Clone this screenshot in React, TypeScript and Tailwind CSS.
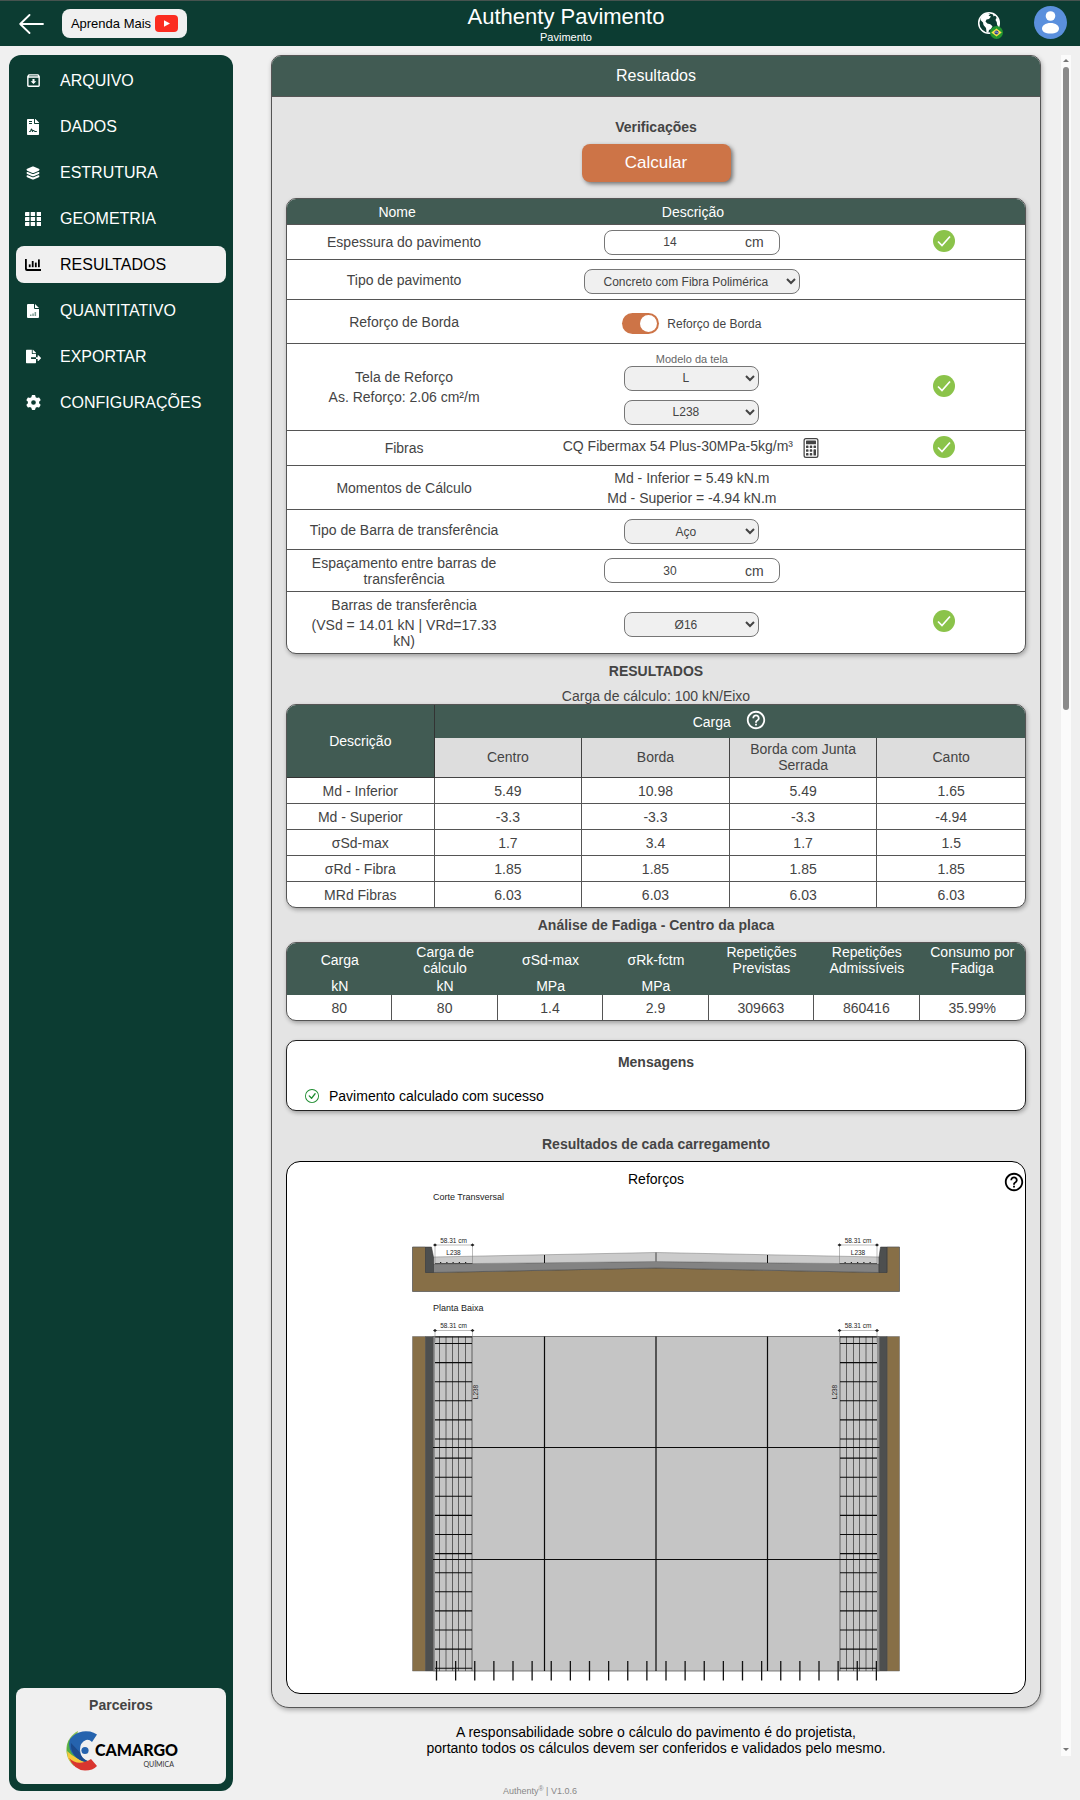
import { useState } from "react";
import type { ReactNode } from "react";
import { BsCalculator, BsCheckCircle } from "react-icons/bs";
import { FaFileContract, FaFileExport } from "react-icons/fa";
import { FaGear } from "react-icons/fa6";
import { IoLayers } from "react-icons/io5";
import { MdHelpOutline, MdOutlineArchive } from "react-icons/md";

const GridIcon = () => (
  <svg viewBox="0 0 16 14" width="16" height="14" fill="currentColor">
    {[0, 5, 10].map((y) => [0, 6, 12].map((x) => <rect key={`${x}-${y}`} x={x - (x ? 0.3 : 0)} y={y} width="4.4" height="4" rx="0.4" />))}
  </svg>
);

const ChartIcon = () => (
  <svg viewBox="0 0 16 12" width="16" height="12" fill="currentColor">
    <path d="M0 0h1.8v9.2q0 .8.8.8H16v2H2q-2 0-2-2z" />
    <rect x="3.8" y="5.4" width="1.8" height="2.8" />
    <rect x="6.8" y="2" width="1.8" height="6.2" />
    <rect x="9.9" y="3.6" width="1.8" height="4.6" />
    <rect x="13" y="0.4" width="1.8" height="7.8" />
  </svg>
);

const FileBarsIcon = () => (
  <svg viewBox="0 0 12 14" width="12" height="14">
    <path fill="currentColor" d="M1 0h6v4q0 1 1 1h4v8q0 1-1 1H1q-1 0-1-1V1q0-1 1-1z" />
    <path fill="currentColor" d="M8 0l4 4H8z" />
    <path fill="#7c9a92" d="M3 10.5h1.5V12H3zM5.3 9.4h1.5V12H5.3zM7.6 8h1.5v4H7.6z" />
  </svg>
);

const GlobeIcon = () => (
  <svg viewBox="0 0 24 24" width="24" height="24">
    <circle cx="12" cy="12" r="10.3" fill="none" stroke="currentColor" strokeWidth="1.500" />
    <path
      fill="currentColor"
      d="M4 6.500Q6.500 2.500 11 2l2 1.500-1.500 1.200 2.500.8-2 2.500-2.500.5L8.500 10.500l1.800 2 3 .8 2.200 2-1.500 2.700-2 1-.7 3-1.800-1-.5-4L6.500 14 6 11.500 3.500 9zM15.500 2.500l3 1.500-1.800 1.500zM20 6l2.300 5-.5 4.500-1.600-1.200-.5-3.300-1.200-2z"
    />
  </svg>
);

const menu: { label: string; icon: ReactNode }[] = [
  { label: "ARQUIVO", icon: <MdOutlineArchive size={17} /> },
  { label: "DADOS", icon: <FaFileContract size={16} /> },
  { label: "ESTRUTURA", icon: <IoLayers size={16} /> },
  { label: "GEOMETRIA", icon: <GridIcon /> },
  { label: "RESULTADOS", icon: <ChartIcon /> },
  { label: "QUANTITATIVO", icon: <FileBarsIcon /> },
  { label: "EXPORTAR", icon: <FaFileExport size={15} /> },
  { label: "CONFIGURAÇÕES", icon: <FaGear size={15} /> },
];

const Header = () => (
  <header className="flex h-[46px] items-center border-t border-[#46534f] bg-[#0c3c32] pl-[19px] text-white">
    <div className="flex w-[168px] shrink-0 items-center gap-[18px]">
      <button aria-label="Voltar">
        <svg viewBox="0 0 25 20" width="25" height="20" fill="none" stroke="currentColor" strokeWidth="1.8" strokeLinecap="round" strokeLinejoin="round">
          <path d="M10.500 1L1.200 10l9.300 9M1.200 10H24" />
        </svg>
      </button>
      <button className="flex h-[29px] w-[125px] items-center justify-center gap-1 rounded-lg bg-[#f0f0f0] text-[13px] text-black">
        Aprenda Mais
        <svg viewBox="0 0 23 17" width="23" height="17">
          <rect width="23" height="17" rx="4" fill="#fb2c20" />
          <path d="M9 5.200v6.600l6-3.300z" fill="#fff" />
        </svg>
      </button>
    </div>
    <div className="flex-1 pt-0.5 text-center">
      <h1 className="text-[22px] leading-6">Authenty Pavimento</h1>
      <p className="text-[11px] leading-4">Pavimento</p>
    </div>
    <div className="flex w-[135px] shrink-0 items-center justify-between pr-[13px] pb-0.5 pl-8">
      <button aria-label="Idioma" className="relative">
        <GlobeIcon />
        <svg viewBox="0 0 12 12" width="13" height="13" className="absolute -right-0.5 -bottom-1">
          <circle cx="6" cy="6" r="6" fill="#22962f" />
          <path d="M6 2.200L10.800 6 6 9.800 1.200 6z" fill="#f8e14a" />
          <circle cx="6" cy="6" r="1.900" fill="#2a3f8f" />
          <path d="M4.300 5.500q2-.2 3.300 1.200" stroke="#fff" strokeWidth=".5" fill="none" />
        </svg>
      </button>
      <button aria-label="Perfil">
        <svg viewBox="0 0 33 33" width="33" height="33">
          <circle cx="16.500" cy="16.500" r="16.500" fill="#5b90dd" />
          <circle cx="16.500" cy="10" r="4.800" fill="#fff" />
          <path d="M8 22.500c0-3 3.300-5.500 8.500-5.500s8.500 2.500 8.500 5.500S22 27.500 16.500 27.500 8 25.500 8 22.500z" fill="#fff" />
        </svg>
      </button>
    </div>
  </header>
);

const CamargoLogo = () => (
  <svg viewBox="0 0 114 44" width="114" height="44" role="img" aria-label="Camargo Química">
    <path d="M14 3A21 21 0 0 0 10 38L16 33A14 14 0 0 1 12 12z" fill="#8cc152" />
    <path d="M5 12A21 21 0 0 0 12 38l6-5Q8 28 9 14z" fill="#4fae48" />
    <path d="M4 30q6 11 18 8l6-5Q14 34 3 23z" fill="#f5c93c" />
    <path d="M33 6.500A20 20 0 0 0 6 11Q2 24 16 32q4 2 8 1.500-8-3-8-12 0-7 6-9.500 3-1 6 2z" fill="#2563ae" />
    <path d="M7 15Q6 27 18 33q4 1.500 7 .5-8-3-9-9z" fill="#1c4a8c" />
    <path d="M5 30Q14 39 27 31l6 7q-4 4.500-12 4.500Q10 42 5 30z" fill="#d9352f" />
    <circle cx="21" cy="22.500" r="3.600" fill="#2563ae" />
    <text x="31" y="28" className="font-['Lato',sans-serif] text-[16px] font-black">CAMARGO</text>
    <text x="110" y="39" textAnchor="end" fill="#333" className="font-['Lato',sans-serif] text-[7px]">QUÍMICA</text>
  </svg>
);

const Sidebar = () => {
  const [active, setActive] = useState("RESULTADOS");
  return (
    <nav className="flex w-56 shrink-0 flex-col rounded-xl bg-[#0c3c32] p-[7px] text-white">
      <ul className="flex flex-1 flex-col gap-[9px]">
        {menu.map(({ label, icon }) => (
          <li key={label}>
            <button
              onClick={() => setActive(label)}
              className={`flex h-[37px] w-full items-center rounded-lg text-base ${active === label ? "bg-[#f0f0f0] text-black" : ""}`}
            >
              <span className="mr-[10px] flex w-[34px] justify-center">{icon}</span>
              {label}
            </button>
          </li>
        ))}
      </ul>
      <div className="flex h-24 flex-col items-center gap-[13px] rounded-lg bg-[#f0f0f0] pt-[7px] text-[#444]">
        <p className="text-sm font-bold">Parceiros</p>
        <CamargoLogo />
      </div>
    </nav>
  );
};

const Ok = () => (
  <svg viewBox="0 0 22 22" width="22" height="22" className="mx-auto" role="img" aria-label="Ok">
    <circle cx="11" cy="11" r="11" fill="#8bc34a" />
    <path d="M5 11.500l4 4 8-9" fill="none" stroke="#fff" strokeWidth="1.700" />
  </svg>
);

const Select = ({ label, value, wide = false }: { label: string; value: string; wide?: boolean }) => (
  <select
    aria-label={label}
    defaultValue={value}
    className={`block h-[25px] rounded-lg border border-[#767676] bg-[#f0f0f0] text-center text-xs text-[#444] ${wide ? "w-[216px]" : "w-[135px]"}`}
  >
    <option>{value}</option>
  </select>
);

const NumberField = ({ label, value }: { label: string; value: string }) => (
  <div className="mx-auto flex h-[25px] w-44 items-center rounded-lg border border-[#767676]">
    <input aria-label={label} defaultValue={value} className="w-[130px] text-center text-xs outline-none" />
    <span className="ml-[10px]">cm</span>
  </div>
);

const Switch = () => (
  <label className="flex items-center justify-center gap-2 text-xs">
    <span className="relative">
      <input type="checkbox" defaultChecked className="peer sr-only" />
      <span className="flex h-[21px] w-[37px] items-center rounded-full bg-gray-400 px-0.5 peer-checked:justify-end peer-checked:bg-[#cd7447]">
        <span className="size-[17px] rounded-full bg-white"></span>
      </span>
    </span>
    Reforço de Borda
  </label>
);

const checks: { name: ReactNode; field: ReactNode; ok?: boolean; height: string }[] = [
  { name: "Espessura do pavimento", field: <NumberField label="Espessura do pavimento" value="14" />, ok: true, height: "h-[35px]" },
  {
    name: "Tipo de pavimento",
    field: <div className="flex justify-center pt-1"><Select label="Tipo de pavimento" value="Concreto com Fibra Polimérica" wide /></div>,
    height: "h-10",
  },
  { name: "Reforço de Borda", field: <div className="pt-1"><Switch /></div>, height: "h-11" },
  {
    name: <><p className="leading-5">Tela de Reforço</p><p className="leading-5">As. Reforço: 2.06 cm²/m</p></>,
    field: (
      <div className="flex flex-col items-center pt-0.5">
        <span className="text-[11px] leading-[14px] text-[#666]">Modelo da tela</span>
        <Select label="Modelo da tela" value="L" />
        <div className="mt-[9px]"><Select label="Tela" value="L238" /></div>
      </div>
    ),
    ok: true,
    height: "h-[87px]",
  },
  {
    name: "Fibras",
    field: (
      <div className="flex items-center justify-center gap-2">
        <span className="pb-1">CQ Fibermax 54 Plus-30MPa-5kg/m³</span>
        <button aria-label="Calcular fibras"><BsCalculator size={20} /></button>
      </div>
    ),
    ok: true,
    height: "h-[35px]",
  },
  {
    name: "Momentos de Cálculo",
    field: <><p className="leading-5">Md - Inferior = 5.49 kN.m</p><p className="leading-5">Md - Superior = -4.94 kN.m</p></>,
    height: "h-11",
  },
  {
    name: "Tipo de Barra de transferência",
    field: <div className="flex justify-center pt-1"><Select label="Tipo de Barra de transferência" value="Aço" /></div>,
    height: "h-10",
  },
  {
    name: "Espaçamento entre barras de transferência",
    field: <NumberField label="Espaçamento entre barras" value="30" />,
    height: "h-[42px]",
  },
  {
    name: <><p>Barras de transferência</p><p className="pt-1">(VSd = 14.01 kN | VRd=17.33 kN)</p></>,
    field: <div className="flex justify-center pt-1"><Select label="Barras de transferência" value="Ø16" /></div>,
    ok: true,
    height: "h-[61px]",
  },
];

const card = "overflow-hidden rounded-[10px] border border-[#555] bg-white shadow-[1px_2px_4px_rgba(0,0,0,0.3)]";

const ChecksTable = () => (
  <div className={`mt-4 ${card}`}>
    <table className="w-full table-fixed border-separate border-spacing-0 text-center">
      <thead className="bg-[#415b53] text-white">
        <tr className="h-[26px]">
          <th className="w-[32%] border-b border-[#555] pr-4 font-normal">Nome</th>
          <th className="w-[46%] border-b border-[#555] font-normal">Descrição</th>
          <th className="border-b border-[#555]"></th>
        </tr>
      </thead>
      <tbody className="[&>tr:last-child>td]:border-b-0">
        {checks.map(({ name, field, ok, height }, i) => (
          <tr key={i}>
            <td className={`border-b border-[#555] pr-[22px] pl-5 ${height}`}>{name}</td>
            <td className="border-b border-[#555] pr-0.5">{field}</td>
            <td className="border-b border-[#555] pb-[3px]">{ok && <Ok />}</td>
          </tr>
        ))}
      </tbody>
    </table>
  </div>
);

const loads = [
  ["Md - Inferior", "5.49", "10.98", "5.49", "1.65"],
  ["Md - Superior", "-3.3", "-3.3", "-3.3", "-4.94"],
  ["σSd-max", "1.7", "3.4", "1.7", "1.5"],
  ["σRd - Fibra", "1.85", "1.85", "1.85", "1.85"],
  ["MRd Fibras", "6.03", "6.03", "6.03", "6.03"],
];

const LoadsTable = () => (
  <div className={card}>
    <table className="w-full table-fixed border-separate border-spacing-0 text-center">
      <thead>
        <tr className="bg-[#415b53] text-white">
          <th rowSpan={2} className="border-r border-b border-[#333] font-normal">Descrição</th>
          <th colSpan={4} className="h-[33px] font-normal">
            <span className="flex items-center justify-center gap-[14px]">
              Carga
              <button aria-label="Ajuda" className="pb-[3px]"><MdHelpOutline size={22} /></button>
            </span>
          </th>
        </tr>
        <tr className="bg-[#dddddd]">
          {["Centro", "Borda", "Borda com Junta Serrada", "Canto"].map((h) => (
            <th key={h} className="h-10 border-r border-b border-[#444] px-2 pb-0.5 font-normal last:border-r-0">{h}</th>
          ))}
        </tr>
      </thead>
      <tbody className="[&>tr:last-child>td]:h-[25px] [&>tr:last-child>td]:border-b-0">
        {loads.map((row) => (
          <tr key={row[0]}>
            {row.map((cell, i) => (
              <td key={i} className="h-[26px] border-r border-b border-[#555] last:border-r-0">{cell}</td>
            ))}
          </tr>
        ))}
      </tbody>
    </table>
  </div>
);

const fatigue = [
  ["Carga", "kN", "80"],
  ["Carga de cálculo", "kN", "80"],
  ["σSd-max", "MPa", "1.4"],
  ["σRk-fctm", "MPa", "2.9"],
  ["Repetições Previstas", "", "309663"],
  ["Repetições Admissíveis", "", "860416"],
  ["Consumo por Fadiga", "", "35.99%"],
];

const FatigueTable = () => (
  <div className={`mt-[7px] ${card}`}>
    <table className="w-full table-fixed border-separate border-spacing-0 text-center">
      <thead className="bg-[#415b53] text-white">
        <tr>
          {fatigue.map(([title]) => <th key={title} className="h-[34px] px-2 font-normal">{title}</th>)}
        </tr>
        <tr>
          {fatigue.map(([title, unit]) => <th key={title} className="h-[18px] font-normal">{unit}</th>)}
        </tr>
      </thead>
      <tbody>
        <tr>
          {fatigue.map(([title, , value]) => (
            <td key={title} className="h-[25px] border-r border-[#555] last:border-r-0">{value}</td>
          ))}
        </tr>
      </tbody>
    </table>
  </div>
);

const Dimension = ({ x, y, drop }: { x: number; y: number; drop: number }) => (
  <g stroke="#333" strokeWidth="1">
    <path d={`M${x} ${y}h75M${x} ${y - 3}v${drop}M${x + 75} ${y - 3}v${drop}`} fill="none" stroke="#777" />
    <path d={`M${x - 4} ${y}l4-3 4 3-4 3zM${x + 71} ${y}l4-3 4 3-4 3z`} fill="#222" stroke="none" />
    <text x={x + 37} y={y - 5} textAnchor="middle" fill="#222" stroke="none" fontSize="13">58.31 cm</text>
  </g>
);

// Plan bars of one edge mesh: x is the outer bar, bars lists the longitudinal ones
const Mesh = ({ x, bars }: { x: number; bars: number[] }) => (
  <g>
    {bars.map((bx) => <path key={bx} d={`M${bx} 295V964`} stroke="#444" strokeWidth="1.6" />)}
    <path d={`M${x} 296h74`} stroke="#111" strokeWidth="2" />
    {Array.from({ length: 18 }, (_, i) => (
      <path key={i} d={`M${x} ${309 + i * 38.2}h74`} stroke="#0a0a0a" strokeWidth="2.2" />
    ))}
  </g>
);

const leftBars = [44, 55, 68, 81, 93, 107, 120];

const ReinforcementDrawing = () => (
  <svg viewBox="0 0 976 984" className="mx-auto h-auto w-[488px] max-w-full" role="img" aria-label="Reforços">
    <text x="42" y="22" fontSize="18" fill="#222">Corte Transversal</text>
    <path d="M1 116H27V167H43L488 158 934 167H950V116H975V205H1z" fill="#876f47" stroke="#555" strokeWidth="1.500" />
    <path d="M43 150L488 145 934 150V167L488 158 43 167z" fill="#838383" stroke="#444" strokeWidth="1" />
    <path d="M43 136L488 127 934 136V150L488 145 43 150z" fill="#cbcbcb" stroke="#777" strokeWidth="1" />
    <path d="M27 116H39L43 136V167H27zM950 116H937L934 136V167H950z" fill="#4d4f4f" stroke="#333" strokeWidth="1" />
    <path d="M265 132V148M711 132V148" stroke="#111" strokeWidth="2" />
    <path d="M488 127V145" stroke="#444" strokeWidth="2" />
    {[46, 855].map((x) => (
      <g key={x}>
        <Dimension x={x} y={112} drop={40} />
        <text x={x + 37} y="132" textAnchor="middle" fontSize="13" fill="#222">L238</text>
        <path d={`M${x} 149h75`} stroke="#333" strokeWidth="1.500" />
        <path d={`M${x + 10} 147h60`} stroke="#222" strokeWidth="2" strokeDasharray="2.500 10" />
      </g>
    ))}

    <text x="42" y="244" fontSize="18" fill="#222">Planta Baixa</text>
    <path d="M1 295H27V964H1zM950 295H975V964H950z" fill="#876f47" stroke="#666" strokeWidth="1" />
    <path d="M27 295H42V964H27zM935 295H950V964H935z" fill="#4d4f4f" stroke="#444" strokeWidth="1" />
    <path d="M42 295H935V964H42z" fill="#c5c5c5" stroke="#555" strokeWidth="1.500" />
    <Mesh x={46} bars={leftBars} />
    <Mesh x={856} bars={leftBars.map((bx) => 976 - bx)} />
    <path d="M265 295V964M488 295V964M711 295V964M42 517H935M42 741H935" stroke="#0a0a0a" strokeWidth="2.400" />
    <Dimension x={46} y={283} drop={26} />
    <Dimension x={855} y={283} drop={26} />
    <text transform="translate(132 406) rotate(-90)" textAnchor="middle" fontSize="13" fill="#222">L238</text>
    <text transform="translate(850 406) rotate(-90)" textAnchor="middle" fontSize="13" fill="#222">L238</text>
    {Array.from({ length: 24 }, (_, i) => (
      <path key={i} d={`M${49 + i * 38.25} 944V983`} stroke="#111" strokeWidth="2.600" />
    ))}
  </svg>
);

const Results = () => (
  <section className="rounded-t-[10px] rounded-b-[18px] border border-[#555] bg-[#e4e4e4] pb-[13px] shadow-[1px_2px_5px_rgba(0,0,0,0.3)]">
    <h2 className="flex h-[41px] items-center justify-center rounded-t-[9px] border-b border-[#555] bg-[#415b53] text-base text-white">
      Resultados
    </h2>
    <div className="px-[14px] pt-5">
      <h3 className="text-center leading-5 font-bold">Verificações</h3>
      <button className="mx-auto mt-[7px] block h-[38px] w-[149px] rounded-lg bg-[#cd7447] text-[17px] text-white shadow-[2px_2px_4px_rgba(0,0,0,0.5)]">
        Calcular
      </button>
      <ChecksTable />
      <h3 className="mt-[7px] text-center leading-5 font-bold">RESULTADOS</h3>
      <p className="mt-[7px] text-center">Carga de cálculo: 100 kN/Eixo</p>
      <LoadsTable />
      <h3 className="mt-[7px] text-center leading-5 font-bold">Análise de Fadiga - Centro da placa</h3>
      <FatigueTable />
      <div className="mt-[19px] h-[71px] rounded-[10px] border border-[#222] bg-white pt-[11px] shadow-[1px_2px_4px_rgba(0,0,0,0.3)]">
        <h3 className="text-center leading-5 font-bold">Mensagens</h3>
        <p className="mt-4 flex items-center gap-[10px] pl-[18px] text-black">
          <BsCheckCircle size={14} className="text-[#1a8a2c]" />
          Pavimento calculado com sucesso
        </p>
      </div>
      <h3 className="mt-[23px] text-center leading-5 font-bold">Resultados de cada carregamento</h3>
      <div className="relative mt-[7px] rounded-[14px] border border-black bg-white pt-[7px] pb-3">
        <h4 className="text-center leading-5 text-black">Reforços</h4>
        <button aria-label="Ajuda" className="absolute top-[9px] right-0 text-black">
          <MdHelpOutline size={22} />
        </button>
        <ReinforcementDrawing />
      </div>
    </div>
  </section>
);

const Scrollbar = () => (
  <div aria-hidden className="flex w-[10px] shrink-0 flex-col items-center bg-[#fbfbfb] py-1">
    <svg viewBox="0 0 6 4" width="6" height="4" fill="#777"><path d="M3 0l3 3H0z" /></svg>
    <span className="mt-1 h-[38%] w-1.5 rounded-full bg-[#8a8a8a]"></span>
    <svg viewBox="0 0 6 4" width="6" height="4" fill="#777" className="mt-auto"><path d="M3 3l3-3H0z" /></svg>
  </div>
);

export default function App() {
  return (
    <div className="flex min-h-screen flex-col bg-[#f0f0f0] font-['Liberation_Sans',Arial,sans-serif] text-sm leading-4 text-[#444]">
      <Header />
      <div className="flex flex-1 gap-[18px] px-[9px] py-[9px]">
        <Sidebar />
        <main className="mb-[35px] flex flex-1">
          <div className="flex-1 px-5">
            <Results />
            <p className="mt-4 text-center text-black">
              A responsabilidade sobre o cálculo do pavimento é do projetista,
              <br />
              portanto todos os cálculos devem ser conferidos e validados pelo mesmo.
            </p>
          </div>
          <Scrollbar />
        </main>
      </div>
      <footer className="-mt-[18px] h-[18px] text-center text-[9px] leading-[18px] text-[#888]">
        Authenty<sup>®</sup> | V1.0.6
      </footer>
    </div>
  );
}
